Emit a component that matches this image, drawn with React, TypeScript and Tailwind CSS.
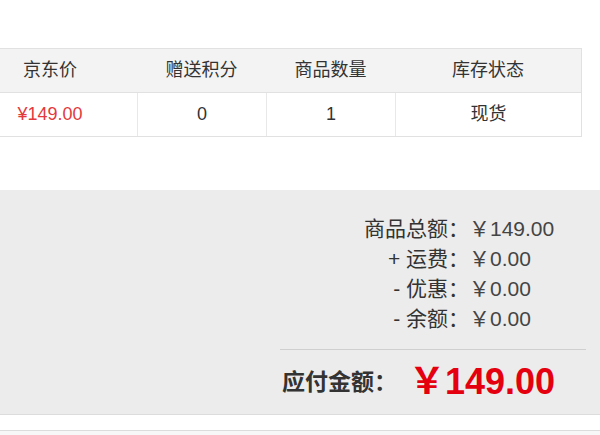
import React from 'react';

const cols = ['京东价', '赠送积分', '商品数量', '库存状态'];

const summaryRows = [
  { label: '商品总额：', value: '149.00' },
  { label: '+ 运费：', value: '0.00' },
  { label: '- 优惠：', value: '0.00' },
  { label: '- 余额：', value: '0.00' },
];

const App: React.FC = () => {
  return (
    <div
      className="w-[600px] h-[435px] overflow-hidden bg-white text-[#333]"
      style={{ fontFamily: '"Liberation Sans", "Noto Sans CJK SC", sans-serif' }}
    >
      <div className="pt-[48px]">
        <div className="ml-[-38px] w-[620px] border border-[#e1e1e1]">
          <div className="grid grid-cols-[174px_129px_129px_186px] h-[44px] bg-[#f3f3f3] border-b border-[#e1e1e1] text-[18px] text-[#333]">
            {cols.map((c) => (
              <div key={c} className="flex items-center justify-center">{c}</div>
            ))}
          </div>
          <div className="grid grid-cols-[174px_129px_129px_186px] h-[43px] text-[18px]">
            <div className="flex items-center justify-center text-[#e4393c]">¥149.00</div>
            <div className="flex items-center justify-center border-l border-[#e8e8e8]">0</div>
            <div className="flex items-center justify-center border-l border-[#e8e8e8]">1</div>
            <div className="flex items-center justify-center border-l border-[#e8e8e8]">现货</div>
          </div>
        </div>
      </div>

      <div className="mt-[53px] bg-[#ececec] border-b border-[#dcdcdc]">
        <div className="pt-[24px] flex justify-end pr-[41px]">
          <div className="grid grid-cols-[auto_90px] text-[21px] leading-[30px] text-[#333]">
            {summaryRows.map((r) => (
              <React.Fragment key={r.label}>
                <div className="text-right">{r.label}</div>
                <div className="text-[#444]">￥{r.value}</div>
              </React.Fragment>
            ))}
          </div>
        </div>
        <div className="mt-[15px] ml-[280px] mr-[14px] border-t border-[#cfcfcf]" />
        <div className="h-[64px] flex items-center justify-end pr-[45px]">
          <span className="text-[23px] font-bold text-[#333]">应付金额：</span>
          <span className="ml-[12px] text-[36px] font-bold text-[#e4000f]">￥149.00</span>
        </div>
      </div>
      <div className="h-[16px] bg-white border-b border-[#dcdcdc]" />
      <div className="h-[10px] bg-[#f7f7f7]" />
    </div>
  );
};

export default App;
